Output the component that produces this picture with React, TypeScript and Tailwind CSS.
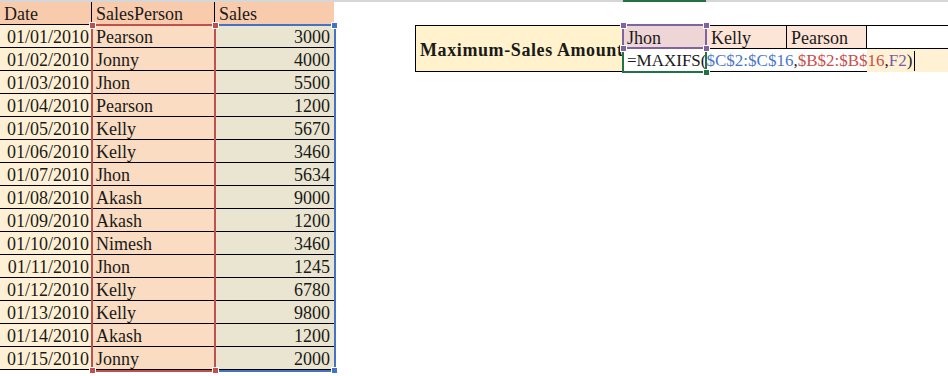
import React from 'react'

const rows: [string, string, number][] = [
  ['01/01/2010', 'Pearson', 3000],
  ['01/02/2010', 'Jonny', 4000],
  ['01/03/2010', 'Jhon', 5500],
  ['01/04/2010', 'Pearson', 1200],
  ['01/05/2010', 'Kelly', 5670],
  ['01/06/2010', 'Kelly', 3460],
  ['01/07/2010', 'Jhon', 5634],
  ['01/08/2010', 'Akash', 9000],
  ['01/09/2010', 'Akash', 1200],
  ['01/10/2010', 'Nimesh', 3460],
  ['01/11/2010', 'Jhon', 1245],
  ['01/12/2010', 'Kelly', 6780],
  ['01/13/2010', 'Kelly', 9800],
  ['01/14/2010', 'Akash', 1200],
  ['01/15/2010', 'Jonny', 2000],
]

const Handle = ({ x, y, color }: { x: number; y: number; color: string }) => (
  <div
    className={`absolute w-[7px] h-[7px] border border-white ${color}`}
    style={{ left: x - 3, top: y - 3 }}
  />
)

const App = () => {
  return (
    <div className="relative w-[948px] h-[376px] overflow-hidden bg-white text-[18px] leading-none text-[#1a1a1a] font-['Liberation_Serif',serif]">
      {/* grid top strip */}
      <div className="flex h-[2px] bg-[#d6d6d6]">
        <div className="w-[623px]" />
        <div className="w-[83px] bg-[#217346]" />
      </div>

      <div className="flex items-start">
        {/* data table */}
        <div className="grid w-[334px] grid-cols-[92px_123px_119px]">
          <div className="flex h-[23px] items-center border-r border-b border-black bg-[#f8cbad] pl-[4px] pt-px">Date</div>
          <div className="flex h-[23px] items-center border-r border-b border-black bg-[#f8cbad] pl-[4px] pt-px">SalesPerson</div>
          <div className="flex h-[23px] items-center border-b border-black bg-[#f8cbad] pl-[4px] pt-px">Sales</div>
          {rows.map(([d, p, s]) => (
            <React.Fragment key={d}>
              <div className="flex h-[23px] items-center justify-end border-r border-b border-black bg-[#fef0d4] pr-[2px] pt-px">{d}</div>
              <div className="flex h-[23px] items-center border-r border-b border-black bg-[#f9dcc2] pl-[4px] pt-px">{p}</div>
              <div className="flex h-[23px] items-center justify-end border-b border-black bg-[#e9e5d0] pr-[4px] pt-px">{s}</div>
            </React.Fragment>
          ))}
        </div>

        {/* lookup block */}
        <div className="ml-[81px] mt-[23px] flex">
          <div className="flex h-[47px] w-[208px] items-center whitespace-nowrap border border-black bg-[#fff2cc] pl-[4px] pt-[2px] font-bold tracking-[0.6px]">
            Maximum-Sales Amount
          </div>
          <div className="flex flex-col">
            <div className="flex h-[24px] border-t border-b border-black">
              <div className="flex w-[83px] items-center bg-[#efd6d6] pl-[4px] pt-px">Jhon</div>
              <div className="flex w-[80px] items-center border-l border-black bg-[#fce4d6] pl-[4px] pt-px">Kelly</div>
              <div className="flex w-[81px] items-center border-l border-r border-black bg-[#fce4d6] pl-[4px] pt-px">Pearson</div>
            </div>
            <div className="relative flex h-[23px]">
              <div className="w-[244px] border-b border-black" />
              <div className="w-[81px] bg-[#fff2d4]" />
              <div className="absolute inset-y-0 left-0 flex items-center whitespace-nowrap pl-[4px] text-[17px]">
                <span>=MAXIFS(</span>
                <span className="text-[#4a78c8]">$C$2:$C$16</span>
                <span>,</span>
                <span className="text-[#c8504a]">$B$2:$B$16</span>
                <span>,</span>
                <span className="text-[#7b5aa6]">F2</span>
                <span>)</span>
                <span className="ml-[2px] h-[20px] w-px shrink-0 bg-black" />
              </div>
            </div>
          </div>
        </div>
      </div>

      {/* reference range overlays */}
      <div className="absolute left-[91px] top-[24px] h-[348px] w-[125px] border-2 border-[#c0504d]" />
      <div className="absolute left-[216px] top-[24px] h-[348px] w-[120px] border-2 border-l-0 border-[#4472c4]" />
      <Handle x={92} y={25} color="bg-[#c0504d]" />
      <Handle x={215} y={25} color="bg-[#c0504d]" />
      <Handle x={92} y={370} color="bg-[#c0504d]" />
      <Handle x={215} y={370} color="bg-[#c0504d]" />
      <Handle x={334} y={25} color="bg-[#4472c4]" />
      <Handle x={334} y={370} color="bg-[#4472c4]" />

      {/* F2 reference and active cell */}
      <div className="absolute left-[622px] top-[47px] h-[26px] w-[85px] border-2 border-[#217346]" />
      <div className="absolute left-[622px] top-[24px] h-[25px] w-[85px] border-2 border-[#8064a2]" />
      <Handle x={623} y={25} color="bg-[#8064a2]" />
      <Handle x={706} y={25} color="bg-[#8064a2]" />
      <Handle x={623} y={48} color="bg-[#8064a2]" />
      <Handle x={706} y={48} color="bg-[#8064a2]" />
      <Handle x={706} y={72} color="bg-[#217346]" />
    </div>
  )
}

export default App
